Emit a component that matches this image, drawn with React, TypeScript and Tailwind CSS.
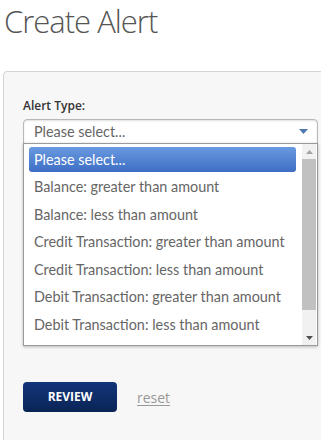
import React from 'react';

const options = [
  'Please select...',
  'Balance: greater than amount',
  'Balance: less than amount',
  'Credit Transaction: greater than amount',
  'Credit Transaction: less than amount',
  'Debit Transaction: greater than amount',
  'Debit Transaction: less than amount',
];

export default function App() {
  return (
    <div className="w-[321px] h-[440px] overflow-hidden bg-white font-['Open_Sans',sans-serif]">
      <h1 className="pl-[4px] text-[31px] leading-[42px] font-light text-[#555] tracking-[-1px] whitespace-nowrap">
        Create Alert
      </h1>

      <div className="ml-[3px] mt-[29px] w-[360px] h-[400px] rounded-[4px] border border-[#d4d4d4] bg-[#f7f7f7] pl-[19px] pt-[26px]">
        <label className="block text-[12px] leading-[16px] font-semibold text-[#333]">Alert Type:</label>

        <div className="relative mt-[5px] w-[295px] font-['Lato',sans-serif]">
          {/* the closed select */}
          <div className="flex h-[25px] items-center justify-between rounded-t-[4px] border border-[#b8b8b8] bg-white pl-[10px] pr-[9px] shadow-[inset_0_1px_2px_rgba(0,0,0,0.12)]">
            <span className="text-[14.4px] text-[#666]">Please select...</span>
            <svg width="9" height="5" viewBox="0 0 9 5">
              <path d="M0 0h9L4.5 5z" fill="#4f76ad" />
            </svg>
          </div>

          {/* open option list */}
          <div className="absolute left-0 top-[24px] z-10 flex h-[203px] w-[295px] border border-[#9a9a9a] bg-white shadow-[0_1px_3px_rgba(0,0,0,0.25)]">
            <div className="flex flex-1 flex-col gap-[2.5px] pl-[5px] pr-[6px] pt-[3px]">
              {options.map((opt, i) => (
                <div
                  key={opt}
                  className={
                    i === 0
                      ? 'flex h-[25px] items-center whitespace-nowrap rounded-[3px] bg-gradient-to-b from-[#6a9ae0] to-[#3d6ec4] pl-[5px] text-[14.4px] text-white'
                      : 'flex h-[25px] items-center whitespace-nowrap pl-[5px] text-[14.4px] text-[#666]'
                  }
                >
                  {opt}
                </div>
              ))}
            </div>
            <div className="mr-[1px] flex w-[14px] flex-col bg-[#f1f1f1]">
              <div className="flex h-[15px] items-center justify-center">
                <svg width="7" height="4" viewBox="0 0 7 4">
                  <path d="M0 4h7L3.5 0z" fill="#a3a3a3" />
                </svg>
              </div>
              <div className="h-[151px] bg-[#c1c1c1]" />
              <div className="flex-1" />
              <div className="flex h-[15px] items-center justify-center">
                <svg width="7" height="4" viewBox="0 0 7 4">
                  <path d="M0 0h7L3.5 4z" fill="#505050" />
                </svg>
              </div>
            </div>
          </div>
        </div>

        {/* fields hidden beneath the open list */}
        <div className="h-[238px]" />

        <div className="flex items-center gap-[20px]">
          <button className="h-[30px] w-[94px] rounded-[4px] bg-gradient-to-b from-[#12357a] to-[#0a2456] text-[12px] font-bold text-white">
            REVIEW
          </button>
          <a className="text-[14px] text-[#999] underline underline-offset-2">reset</a>
        </div>
      </div>
    </div>
  );
}
